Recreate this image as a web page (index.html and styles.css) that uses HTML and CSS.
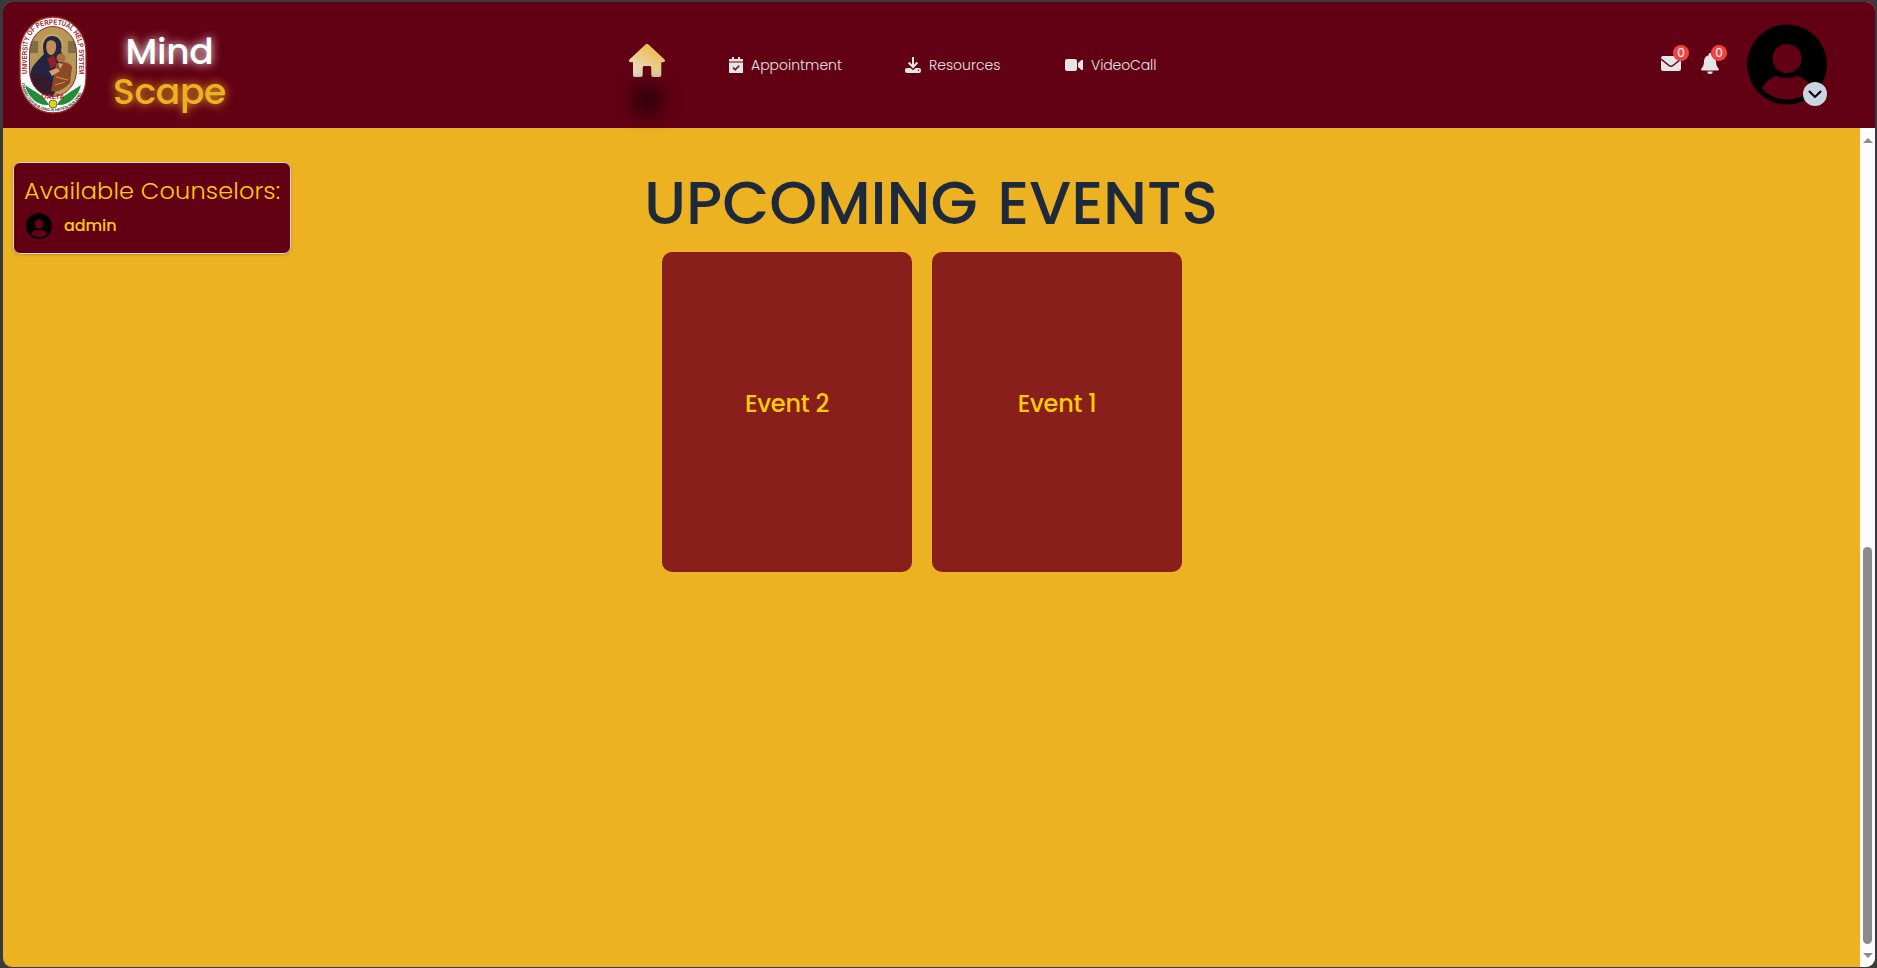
FILE: index.html
```html
<!DOCTYPE html>
<html lang="en">
<head>
<meta charset="utf-8">
<title>MindScape</title>
<link rel="stylesheet" href="styles.css">
</head>
<body>
<svg width="0" height="0" class="defs">
  <symbol id="user" viewBox="0 0 80 80">
    <path fill-rule="evenodd" d="M40 0a40 40 0 1 1 0 80a40 40 0 0 1 0-80zM40 19.500a14.500 14.500 0 1 0 0 29a14.500 14.500 0 1 0 0-29zM30 51.500c-6.500.8-12 6.500-15 12.500c6 7 15 11 25 11s19-4 25-11c-3-6-8.500-11.700-15-12.500c-3 1.500-6.500 2-10 2s-7-.5-10-2z"/>
  </symbol>
</svg>
<div class="window">
  <header class="header">
    <svg class="seal" viewBox="0 0 68 98">
      <defs>
        <path id="arcTop" d="M8.500 58V34C8.500 16 20 8.500 34 8.500S59.500 16 59.500 34V58"/>
        <path id="arcBottom" d="M2.500 67C5 85 18 95.300 34 95.300S63 85 65.500 67"/>
        <clipPath id="oval"><rect x="10.500" y="10.500" width="47" height="70" rx="23.500" ry="26"/></clipPath>
      </defs>
      <rect x="1" y="1" width="66" height="96" rx="33" ry="35" fill="#fff" stroke="#a32a28" stroke-width="1.300"/>
      <g clip-path="url(#oval)">
        <rect x="10" y="10" width="48" height="72" fill="#b69958"/>
        <path d="M11 25h8v12h-8zM49 25h8v12h-8z" fill="#806e43"/>
        <circle cx="33" cy="29" r="11" fill="#c9a862"/>
        <path d="M25 38c-3-10 1-18 8-18c8 0 11 7 9 15l3 7l-3 20l-8 19H15c-5-8-6-20-2-29c3-5 8-10 12-14z" fill="#222440"/>
        <path d="M28 26c3-3 8-2 9 2c1 6-2 11-5 11c-4 0-6-7-4-13z" fill="#c58b5a"/>
        <path d="M28 43l7-4l3 9l-6 5z" fill="#8d202a"/>
        <path d="M13 57l13 3l9 8l-4 14H16z" fill="#351b2c"/>
        <circle cx="42" cy="42" r="4.500" fill="#aa6d3c"/>
        <path d="M37 48c7-3 14-2 16 3l-2 16c-6 6-12 10-19 8z" fill="#8d4825"/>
        <path d="M30 55l8-3l3 3l-8 5zM39 47l5 1l-3 5z" fill="#d1a16f"/>
        <path d="M37 61l12 3M36 69l10-3" stroke="#c8994a" fill="none"/>
      </g>
      <rect x="10.500" y="10.500" width="47" height="70" rx="23.500" ry="26" fill="none" stroke="#9b292b"/>
      <path d="M6 69c3 12 12 21 24 20C25 79 16 76 6 69zM62 69c-3 12-12 21-24 20c5-10 14-13 24-20z" fill="#208e35"/>
      <circle cx="34" cy="88" r="4" fill="#e8cf20" stroke="#568527"/>
      <text class="sealTop" textLength="130" lengthAdjust="spacingAndGlyphs"><textPath href="#arcTop">UNIVERSITY OF PERPETUAL HELP SYSTEM</textPath></text>
      <text class="sealName" x="34" y="83" text-anchor="middle">DALTA</text>
      <text class="sealBottom"><textPath href="#arcBottom" textLength="82">CHARACTER BUILDING IS NATION BUILDING</textPath></text>
    </svg>
    <div class="brand"><span class="mind">Mind</span><span class="scape">Scape</span></div>
    <nav class="nav">
      <a class="home">
        <svg viewBox="0 0 36 33" width="36" height="33">
          <defs><linearGradient id="gold" x1="0" y1="1" x2=".7" y2="0"><stop offset="0" stop-color="#e8e5df"/><stop offset="1" stop-color="#ecb944"/></linearGradient></defs>
          <path fill="url(#gold)" d="M16.500.6a2.200 2.200 0 0 1 3 0L35.300 15.200c1.300 1.200.8 3-1 3h-2V31a2 2 0 0 1-2 2h-6a2 2 0 0 1-2-2v-7.500a1.500 1.500 0 0 0-1.500-1.500h-5.600a1.500 1.500 0 0 0-1.500 1.500V31a2 2 0 0 1-2 2H6a2 2 0 0 1-2-2V18.200H1.700c-1.800 0-2.300-1.800-1-3z"/>
        </svg>
      </a>
      <a class="link appointment">
        <svg viewBox="0 0 14 16" width="14" height="16"><path d="M3 0h2v2h4V0h2v2h3v2.500H0V2h3zM0 5.500h14V16H0z"/><path class="cut" d="M4 10.500l2.200 2.200L10.200 8.700"/></svg>
        <span>Appointment</span>
      </a>
      <a class="link resources">
        <svg viewBox="0 0 16 16" width="16" height="16"><path d="M7 0h2v7.500l2.700-2.700l1.400 1.400L8 11.500L2.900 6.200l1.400-1.400L7 7.500z"/><path fill-rule="evenodd" d="M2 11h3.500L8 13.300L10.500 11H14a2 2 0 0 1 2 2v1a2 2 0 0 1-2 2H2a2 2 0 0 1-2-2v-1a2 2 0 0 1 2-2zm11 1.800v1.200h1.200v-1.200z"/></svg>
        <span>Resources</span>
      </a>
      <a class="link video">
        <svg viewBox="0 0 18 12" width="18" height="12"><path d="M2 0h8a2 2 0 0 1 2 2v8a2 2 0 0 1-2 2H2a2 2 0 0 1-2-2V2a2 2 0 0 1 2-2zM13 4l3.500-3H18v10h-1.500L13 8z"/></svg>
        <span>VideoCall</span>
      </a>
    </nav>
    <div class="alerts">
      <div class="mail">
        <svg viewBox="0 0 20 15" width="20" height="15"><path d="M2 0h16a2 2 0 0 1 2 2v11a2 2 0 0 1-2 2H2a2 2 0 0 1-2-2V2a2 2 0 0 1 2-2z"/><path class="cut" d="M0 3l8 6.500q2 1.600 4 0L20 3"/></svg>
        <span class="badge">0</span>
      </div>
      <div class="bell">
        <svg viewBox="0 0 18 21" width="18" height="21"><path d="M9 0a1.300 1.300 0 0 1 1.300 1.300v1C13.400 3 15 5.500 15 8.200c0 3.800 1 5.500 2.600 7.200c.8.900.3 2.100-.9 2.100H1.300c-1.200 0-1.700-1.200-.9-2.100C2 13.700 3 12 3 8.200C3 5.500 4.600 3 7.700 2.300v-1A1.300 1.300 0 0 1 9 0zM6.200 18.500h5.600a2.800 2.400 0 0 1-5.600 0z"/></svg>
        <span class="badge">0</span>
      </div>
    </div>
    <div class="profile">
      <svg class="avatar"><use href="#user"/></svg>
      <span class="toggle"><svg viewBox="0 0 14 8" width="14" height="8"><path d="M1 1l6 6l6-6" fill="none" stroke="#000" stroke-width="2"/></svg></span>
    </div>
  </header>
  <div class="body">
    <aside class="side">
      <section class="counselors">
        <h2>Available Counselors:</h2>
        <div class="person"><svg class="face" viewBox="0 0 80 80"><use href="#user" width="80" height="80"/></svg><span>admin</span></div>
      </section>
    </aside>
    <main class="main">
      <h1>UPCOMING EVENTS</h1>
      <div class="cards">
        <article class="card">Event 2</article>
        <article class="card">Event 1</article>
      </div>
    </main>
    <div class="scrollbar">
      <i class="up"></i><i class="thumb"></i><i class="down"></i>
    </div>
  </div>
</div>
</body>
</html>
```
FILE: styles.css
```css
* { box-sizing: border-box; }
body {
  margin: 0;
  height: 968px;
  padding: 2px 2px 1px 3px;
  overflow: hidden;
  background: #3a3a3c;
  font-family: Poppins, Inter, "Open Sans", sans-serif;
}
.defs { display: block; width: 0; height: 0; }
svg { display: block; flex: none; }
.window { height: 965px; border-radius: 9px; overflow: hidden; background: #ecb222; display: flex; flex-direction: column; }

.header { height: 126px; flex: none; background: #630114; display: flex; align-items: flex-start; }
.seal { width: 68px; height: 98px; margin: 14px 0 0 16px; }
.sealTop { font: 700 7.500px "Liberation Sans Narrow", "Liberation Sans", sans-serif; fill: #9b292b; }
.sealName { font: 700 7px "Liberation Sans", sans-serif; fill: #b52c2c; letter-spacing: .2px; }
.sealBottom { font: 700 4px "Liberation Sans", sans-serif; fill: #333; }
.brand { width: 165px; margin-top: 30px; display: flex; flex-direction: column; align-items: center; font-size: 36px; font-weight: 500; line-height: 40px; letter-spacing: -.3px; }
.mind { color: #fff; text-shadow: 0 0 10px #fff; }
.scape { color: #ecb222; text-shadow: 0 0 10px #ecb222; }

.nav { width: 762px; margin-left: 377px; display: flex; align-items: flex-start; }
.home { width: 36px; margin-top: 42px; display: flex; flex-direction: column; }
.home::after { content: ""; width: 32px; height: 30px; margin: 8px 0 0 2px; background: #35000b; filter: blur(8px); }
.link { display: flex; align-items: center; height: 24px; margin-top: 51px; gap: 8px; color: #e5e5e5; fill: #e5e5e5; font-size: 14px; font-weight: 300; line-height: 24px; white-space: nowrap; }
.link span { display: block; }
.appointment { width: 112px; margin-left: 64px; }
.resources { width: 97px; margin-left: 64px; }
.video { margin-left: 63px; letter-spacing: -.1px; }
.cut { fill: none; stroke: #630114; stroke-width: 1.500px; }

.alerts { display: flex; margin: 54px 0 0 270px; gap: 20px; fill: #e5e5e5; }
.mail, .bell { position: relative; }
.bell { margin-top: -3px; }
.badge { position: absolute; top: -11px; left: 12px; width: 16px; height: 16px; border-radius: 50%; background: #ef4444; color: #fff; font-size: 12px; line-height: 16px; text-align: center; }
.bell .badge { top: -8px; left: 10px; }
.profile { position: relative; width: 80px; height: 81px; margin: 22px 0 0 28px; }
.avatar { width: 80px; height: 81px; }
.toggle { position: absolute; left: 56px; top: 58px; width: 24px; height: 24px; border-radius: 50%; background: #cbd5e1; display: flex; align-items: center; justify-content: center; }

.body { flex: 1; display: flex; min-height: 0; }
.side { width: 288px; padding: 34px 0 0 10px; }
.counselors { width: 278px; height: 92px; border: 1px solid #e5d5d0; border-radius: 7px; background: #630114; color: #ffcb08; padding: 10px 0 0 10px; box-shadow: 0 1px 3px #0003; }
h2 { margin: 0; font-size: 24px; line-height: 36px; font-weight: 300; letter-spacing: .15px; white-space: nowrap; }
.person { display: flex; align-items: center; height: 26px; margin: 4px 0 0 2px; gap: 12px; font-size: 16px; font-weight: 500; line-height: 24px; letter-spacing: -.1px; }
.face { width: 26px; height: 26px; }
.main { flex: 1; padding-top: 38px; }
h1 { margin: 0; padding-left: 353px; font-size: 61px; line-height: 74px; font-weight: 500; word-spacing: 4px; letter-spacing: -.12px; color: #1e293b; white-space: nowrap; }
.cards { display: flex; gap: 20px; margin: 12px 0 0 371px; }
.card { width: 250px; height: 320px; border-radius: 10px; background: #881f1a; color: #ffcb08; text-align: center; font-size: 24px; font-weight: 500; line-height: 32px; letter-spacing: -.25px; padding-top: 136px; }

.scrollbar { width: 15px; background: #fcfcfc; display: flex; flex-direction: column; align-items: center; }
.up { border: 5px solid transparent; border-top: 0; border-bottom-color: #8b8b8b; margin-top: 10px; }
.thumb { width: 9px; height: 397px; margin-top: 404px; border-radius: 5px; background: #8b8b8b; }
.down { border: 5px solid transparent; border-bottom: 0; border-top-color: #8b8b8b; margin-top: 9px; }
```
